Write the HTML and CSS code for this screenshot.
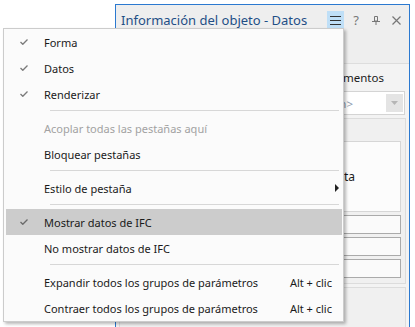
FILE: index.html
```html
<!DOCTYPE html>
<html lang="es">
<head>
    <meta charset="UTF-8">
    <title>Información del objeto - Menú</title>
    <link rel="stylesheet" href="styles.css">
</head>
<body>
    <div class="panel">
        <div class="panel-title">
            <span class="panel-name">Información del objeto - Datos</span>
            <div class="panel-tools">
                <span class="tool tool-active">
                    <svg width="11" height="9" viewBox="0 0 11 9"><path d="M0 0.5h11M0 4.5h11M0 8.5h11" stroke="#333" stroke-width="1"/></svg>
                </span>
                <span class="tool tool-help">?</span>
                <span class="tool">
                    <svg width="8" height="9" viewBox="0 0 8 9"><path d="M2.5 0.5h3v4.5h-3zM0 5.5h8M4 5.5v3.5" stroke="#777" stroke-width="1" fill="none"/></svg>
                </span>
                <span class="tool">
                    <svg width="9" height="9" viewBox="0 0 9 9"><path d="M0.5 0.5l8 8M8.5 0.5l-8 8" stroke="#777" stroke-width="1.2"/></svg>
                </span>
            </div>
        </div>
        <div class="panel-toolbar"></div>
        <div class="panel-body">
            <div class="tabs">
                <span class="tab">Propiedades</span>
                <span class="tab">Documentos</span>
            </div>
            <div class="combo">
                <span class="combo-value">&lt;Sin selección&gt;</span>
                <span class="combo-button">
                    <svg width="7" height="4" viewBox="0 0 7 4"><path d="M0 0h7l-3.5 4z" fill="#b5b5b5"/></svg>
                </span>
            </div>
            <div class="section">
                <div class="message">Seleccione un elemento de la vista</div>
                <div class="field"></div>
                <div class="field"></div>
                <div class="field"></div>
            </div>
            <div class="section section-last"></div>
        </div>
    </div>

    <div class="menu">
        <div class="menu-item">
            <span class="check"><svg width="8" height="6" viewBox="0 0 8 6"><path d="M0.5 3l2.3 2.3 4.7-4.8" stroke="#7a7a7a" stroke-width="1.3" fill="none"/></svg></span>
            <span class="label">Forma</span>
        </div>
        <div class="menu-item">
            <span class="check"><svg width="8" height="6" viewBox="0 0 8 6"><path d="M0.5 3l2.3 2.3 4.7-4.8" stroke="#7a7a7a" stroke-width="1.3" fill="none"/></svg></span>
            <span class="label">Datos</span>
        </div>
        <div class="menu-item">
            <span class="check"><svg width="8" height="6" viewBox="0 0 8 6"><path d="M0.5 3l2.3 2.3 4.7-4.8" stroke="#7a7a7a" stroke-width="1.3" fill="none"/></svg></span>
            <span class="label">Renderizar</span>
        </div>
        <div class="separator"></div>
        <div class="menu-item disabled">
            <span class="check"></span>
            <span class="label">Acoplar todas las pestañas aquí</span>
        </div>
        <div class="menu-item">
            <span class="check"></span>
            <span class="label">Bloquear pestañas</span>
        </div>
        <div class="separator"></div>
        <div class="menu-item">
            <span class="check"></span>
            <span class="label">Estilo de pestaña</span>
            <span class="submenu-arrow"></span>
        </div>
        <div class="separator"></div>
        <div class="menu-item selected">
            <span class="check"><svg width="8" height="6" viewBox="0 0 8 6"><path d="M0.5 3l2.3 2.3 4.7-4.8" stroke="#6a6a6a" stroke-width="1.3" fill="none"/></svg></span>
            <span class="label">Mostrar datos de IFC</span>
        </div>
        <div class="menu-item">
            <span class="check"></span>
            <span class="label">No mostrar datos de IFC</span>
        </div>
        <div class="separator"></div>
        <div class="menu-item">
            <span class="check"></span>
            <span class="label">Expandir todos los grupos de parámetros</span>
            <span class="shortcut">Alt + clic</span>
        </div>
        <div class="menu-item">
            <span class="check"></span>
            <span class="label">Contraer todos los grupos de parámetros</span>
            <span class="shortcut">Alt + clic</span>
        </div>
    </div>
</body>
</html>
```

FILE: styles.css
```css
:root {
    --accent: #2b79d0;
    --panel-bg: #eeeeee;
    --menu-bg: #fbfbfb;
    --text: #1a1a1a;
}

body {
    margin: 0;
    background: #ffffff;
    font-family: 'Noto Sans', 'Open Sans', sans-serif;
    font-size: 11px;
    color: var(--text);
    position: relative;
    width: 415px;
    height: 327px;
    overflow: hidden;
}

/* docked panel behind the menu */
.panel {
    position: absolute;
    left: 115px;
    top: 4px;
    width: 293px;
    height: 330px;
    border: 1px solid var(--accent);
    border-bottom: none;
    background: var(--panel-bg);
    display: flex;
    flex-direction: column;
}

.panel-title {
    height: 30px;
    display: flex;
    align-items: center;
    padding: 0 0 0 5px;
}

.panel-name {
    font-size: 13px;
    color: #1f4f86;
    margin-top: -1px;
    white-space: nowrap;
}

.panel-tools {
    display: flex;
    flex-shrink: 0;
    align-self: flex-start;
    margin: 6px 3px 0 auto;
}

.tool {
    width: 20px;
    height: 18px;
    flex-shrink: 0;
    display: flex;
    align-items: center;
    justify-content: center;
    color: #777;
    font-size: 13px;
}

.tool-active {
    width: 17px;
    height: 20px;
    background: #bfdff7;
    margin-right: 2px;
    align-items: flex-start;
    padding-top: 5px;
    box-sizing: border-box;
}

.panel-toolbar {
    height: 28px;
}

.panel-body {
    flex: 1;
    border-top: 1px solid #dddddd;
    background: #f3f3f3;
    padding: 0 3px 0 3px;
    display: flex;
    flex-direction: column;
}

.tabs {
    height: 27px;
    display: flex;
    align-items: center;
    justify-content: flex-end;
    gap: 14px;
    padding-right: 22px;
    font-size: 11.5px;
}

.combo {
    height: 22px;
    margin-right: 1px;
    border: 1px solid #d4d4d4;
    background: #ffffff;
    display: flex;
    align-items: center;
    justify-content: flex-end;
}

.combo-value {
    color: #8a9aae;
    font-size: 11.5px;
    margin-right: 33px;
}

.combo-button {
    width: 17px;
    height: 18px;
    margin-right: 1px;
    background: #e4e4e4;
    display: flex;
    align-items: center;
    justify-content: center;
}

.section {
    margin-top: 3px;
    border: 1px solid #dcdcdc;
    background: #f0f0f0;
    padding: 22px 4px 5px 4px;
    display: flex;
    flex-direction: column;
    gap: 3px;
}

.message {
    height: 69px;
    border: 1px solid #d6d6d6;
    background: #fcfcfc;
    display: flex;
    align-items: center;
    justify-content: flex-end;
    padding-right: 45px;
    font-size: 12px;
}

.field {
    height: 17px;
    border: 1px solid #aaaaaa;
    background: #fafafa;
}

.section-last {
    flex: 1;
    margin-top: 3px;
    padding: 0;
}

/* context menu */
.menu {
    position: absolute;
    left: 3px;
    top: 28px;
    width: 339px;
    background: var(--menu-bg);
    border: 1px solid #cccccc;
    box-shadow: 2px 2px 3px rgba(0, 0, 0, 0.28);
    padding: 0;
}

.menu-item {
    height: 26px;
    margin: 0 1px 0 2px;
    display: flex;
    align-items: center;
}

.menu-item.selected {
    background: #cccccc;
}

.menu-item.disabled .label {
    color: #a2a2a2;
}

.check {
    width: 38px;
    display: flex;
    justify-content: center;
    padding-right: 3px;
    box-sizing: border-box;
}

.label {
    flex: 1;
    white-space: nowrap;
}

.shortcut {
    padding-right: 10px;
    white-space: nowrap;
}

.submenu-arrow {
    width: 0;
    height: 0;
    border-top: 4px solid transparent;
    border-bottom: 4px solid transparent;
    border-left: 4px solid #222;
    margin-right: 3px;
}

.separator {
    height: 1px;
    margin: 3px 4px 4px 46px;
    background: #d7d7d7;
}
```
